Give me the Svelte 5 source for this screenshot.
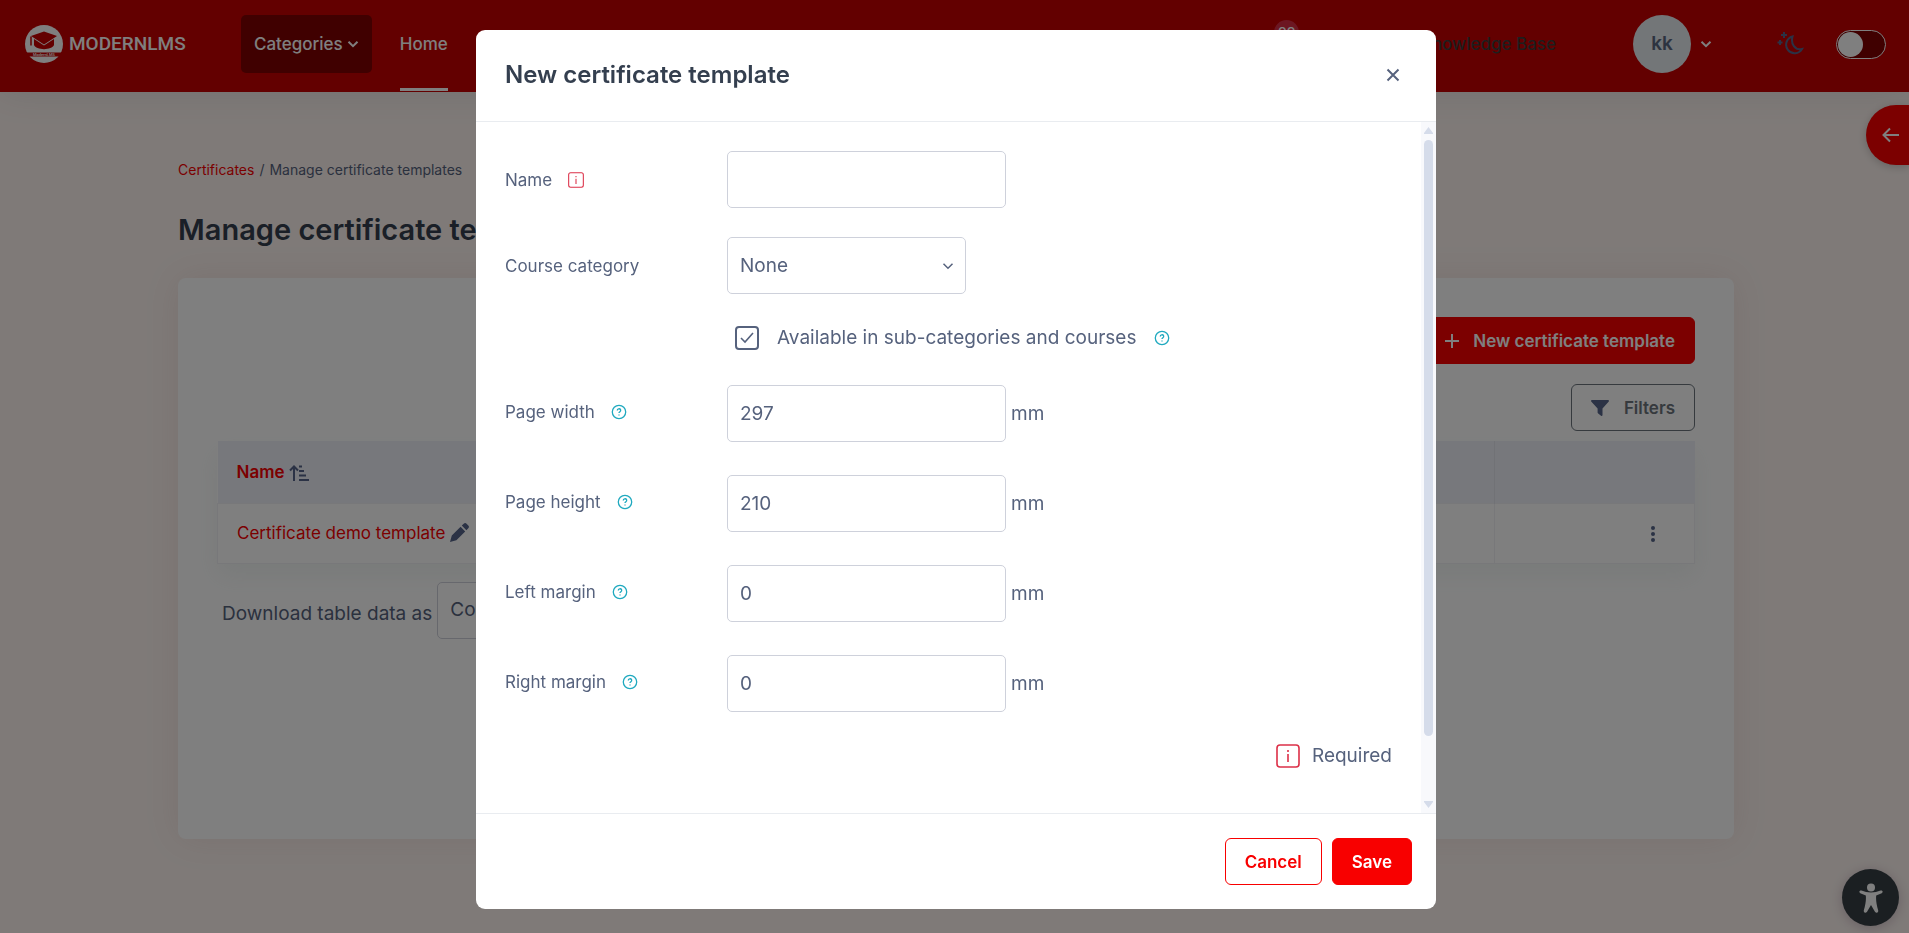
<script lang="ts">
	interface Size {
		id: string;
		label: string;
		value: string;
	}

	let name = $state('');
	let category = $state('none');
	let subCategories = $state(true);
	let darkMode = $state(false);
	let open = $state(true);

	let sizes: Size[] = $state([
		{ id: 'width', label: 'Page width', value: '297' },
		{ id: 'height', label: 'Page height', value: '210' },
		{ id: 'left', label: 'Left margin', value: '0' },
		{ id: 'right', label: 'Right margin', value: '0' }
	]);

	function close() {
		open = false;
	}
</script>

{#snippet chevron(size: number)}
	<svg class="chevron" width={size} height={size} viewBox="0 0 12 12" aria-hidden="true">
		<path d="M1.5 3.8 6 8.2l4.500-4.400" />
	</svg>
{/snippet}

{#snippet help()}
	<button type="button" class="help" aria-label="Help">
		<svg width="16" height="16" viewBox="0 0 16 16">
			<circle cx="8" cy="8" r="6.700" />
			<path d="M6.300 6.500a1.700 1.600 0 1 1 2.500 1.300c-.6.3-.8.600-.8 1.200M8 10.600v1" />
		</svg>
	</button>
{/snippet}

{#snippet required(size: number)}
	<svg class="required-icon" width={size} height={size} viewBox="0 0 24 24" role="img" aria-label="Required">
		<rect x="1" y="1" width="22" height="22" rx="3" />
		<path d="M12 6v2M12 10v8" />
	</svg>
{/snippet}

<div class="page">
	<header class="topbar">
		<a class="logo" href="#home" aria-label="ModernLMS">
			<svg width="38" height="38" viewBox="0 0 38 38" aria-hidden="true">
				<circle cx="19" cy="19" r="19" fill="#fff" />
				<path d="M19 6.500 32 11 19 19.500 6 11Z" fill="#c60000" />
				<path d="M9 14v6c2 5.500 18 5.500 20 0v-6l-10 6.500Z" fill="#c60000" />
				<path d="M6 11.500v9" stroke="#c60000" stroke-width="1.500" />
				<path d="M0 27.500h38v4H0z" fill="#c60000" />
				<text x="19" y="31" text-anchor="middle" font-size="4" fill="#fff">ModernLMS</text>
			</svg>
			<span>MODERNLMS</span>
		</a>
		<nav class="nav">
			<button type="button" class="categories">Categories {@render chevron(12)}</button>
			<a class="nav-link active" href="#home">Home</a>
		</nav>
		<div class="tools">
			<span class="badge">99</span>
			<a class="kb" href="#kb">Knowledge Base</a>
			<button type="button" class="user">
				<span class="avatar">kk</span>
				{@render chevron(12)}
			</button>
			<svg class="moon" width="28" height="26" viewBox="0 0 28 26" aria-hidden="true">
				<path d="M16.500 5.500a8.500 8.500 0 1 0 9.500 12.500c-7 1.500-11.500-5-9.500-12.500Z" />
				<path d="M8 1v6M5 4h6M4 9v5M1.500 11.500h5" />
			</svg>
			<label class="switch">
				<input type="checkbox" bind:checked={darkMode} aria-label="Dark mode" />
			</label>
		</div>
	</header>

	<main>
		<nav class="breadcrumb">
			<a href="#certificates">Certificates</a><span>/</span><span>Manage certificate templates</span>
		</nav>
		<h1>Manage certificate templates</h1>

		<section class="card">
			<div class="actions">
				<button type="button" class="btn primary" onclick={() => (open = true)}>
					<svg width="16" height="16" viewBox="0 0 16 16" aria-hidden="true">
						<path d="M8 1v14M1 8h14" stroke="#fff" stroke-width="2" />
					</svg>
					New certificate template
				</button>
				<button type="button" class="btn filters">
					<svg width="18" height="16" viewBox="0 0 18 16" aria-hidden="true">
						<path d="M1 0h16c1 0 1.300 1 .6 1.700L11.500 8.500V15c0 .9-.8 1.200-1.500.7L7.200 13.500c-.4-.3-.6-.6-.6-1V8.500L.4 1.700C-.3 1 0 0 1 0Z" fill="#56658a" />
					</svg>
					Filters
				</button>
			</div>

			<table>
				<thead>
					<tr>
						<th>
							<a href="#sort">Name</a>
							<svg width="20" height="16" viewBox="0 0 20 16" aria-hidden="true">
								<path d="M5 16V2M1 5.500 5 1.500l4 4M10 1.500h3M10 6h5M10 10.500h7M10 15h10" />
							</svg>
						</th>
						<th class="menu-cell"></th>
					</tr>
				</thead>
				<tbody>
					<tr>
						<td>
							<a href="#template">Certificate demo template</a>
							<svg class="pencil" width="19" height="19" viewBox="0 0 19 19" aria-hidden="true">
								<path d="m10.600 3.800 4.600 4.600-8.800 8.800L0 19l1.800-6.400Zm1.200-1.200 1.900-1.900c.9-.9 2-.9 2.900 0l1.700 1.700c.9.9.9 2 0 2.900l-1.900 1.900Z" />
							</svg>
						</td>
						<td class="menu-cell">
							<button type="button" class="dots" aria-label="Actions">
								<svg width="6" height="16" viewBox="0 0 6 16">
									<circle cx="3" cy="2" r="2" /><circle cx="3" cy="8" r="2" /><circle cx="3" cy="14" r="2" />
								</svg>
							</button>
						</td>
					</tr>
				</tbody>
			</table>

			<div class="download">
				<label for="download">Download table data as</label>
				<select id="download" class="control">
					<option>Comma separated values (.csv)</option>
				</select>
			</div>
		</section>
	</main>

	<button type="button" class="drawer" aria-label="Open block drawer">
		<svg width="18" height="16" viewBox="0 0 18 16">
			<path d="M17 8H2M8 1.500 1.500 8 8 14.500" />
		</svg>
	</button>
	<button type="button" class="accessibility" aria-label="Accessibility">
		<svg width="24" height="30" viewBox="0 0 24 30">
			<circle cx="12" cy="4.500" r="4" />
			<path d="M2.500 7.600c3 1.300 6 2 9.500 2s6.500-.7 9.500-2c2-.8 3 1.700 1.200 2.600l-5.500 2.400c-.5 4 .4 9.500 2 15 .4 2.200-2.600 3-3.400 1L12 22l-3.800 6.600c-.8 2-3.800 1.200-3.400-1 1.600-5.500 2.500-11 2-15L1.300 10.200c-1.800-.9-.8-3.400 1.200-2.600Z" />
		</svg>
	</button>
</div>

{#if open}
	<div class="backdrop">
		<div class="modal" role="dialog" aria-modal="true" aria-labelledby="modal-title">
			<div class="modal-header">
				<h2 id="modal-title">New certificate template</h2>
				<button type="button" class="close" aria-label="Close" onclick={close}>
					<svg width="14" height="14" viewBox="0 0 14 14">
						<path d="m1.500 1.500 11 11M12.500 1.500l-11 11" />
					</svg>
				</button>
			</div>

			<div class="modal-body">
				<form id="template-form">
					<div class="row">
						<div class="label"><label for="name">Name</label>{@render required(16)}</div>
						<input id="name" class="control" type="text" bind:value={name} />
					</div>
					<div class="row">
						<div class="label"><label for="category">Course category</label></div>
						<div class="select">
							<select id="category" class="control" bind:value={category}>
								<option value="none">None</option>
							</select>
							{@render chevron(12)}
						</div>
					</div>
					<div class="row">
						<span></span>
						<div class="check">
							<span class="box">
								<input id="sub" type="checkbox" bind:checked={subCategories} />
								{#if subCategories}
									<svg width="24" height="24" viewBox="0 0 24 24" aria-hidden="true">
										<path d="m6 12 4 4 8-9" />
									</svg>
								{/if}
							</span>
							<label for="sub">Available in sub-categories and courses</label>
							{@render help()}
						</div>
					</div>
					<div class="sizes">
						{#each sizes as size (size.id)}
							<div class="row">
								<div class="label"><label for={size.id}>{size.label}</label>{@render help()}</div>
								<div class="unit">
									<input id={size.id} class="control" type="text" bind:value={size.value} />
									<span>mm</span>
								</div>
							</div>
						{/each}
					</div>
					<div class="legend">{@render required(24)} Required</div>
				</form>
				<div class="scrollbar" aria-hidden="true">
					<svg width="9" height="7" viewBox="0 0 9 7"><path d="M4.500 0 9 6v1H0V6Z" /></svg>
					<div class="track"><div class="thumb"></div></div>
					<svg width="9" height="7" viewBox="0 0 9 7"><path d="M4.500 7 9 1V0H0v1Z" /></svg>
				</div>
			</div>

			<div class="modal-footer">
				<button type="button" class="btn outline" onclick={close}>Cancel</button>
				<button type="submit" form="template-form" class="btn primary">Save</button>
			</div>
		</div>
	</div>
{/if}

<style>
	:global(body) {
		margin: 0;
		background: #fef5f1;
		color: #56627d;
		font-family: Inter, 'Open Sans', sans-serif;
		font-size: 19px;
		line-height: 30px;
	}

	* {
		box-sizing: border-box;
	}

	a {
		color: #f80000;
		text-decoration: none;
	}

	button {
		padding: 0;
		border: none;
		background: none;
		color: inherit;
		font: inherit;
		cursor: pointer;
	}

	svg {
		display: block;
		flex: none;
		fill: none;
	}

	.chevron {
		stroke: currentColor;
		stroke-width: 2;
	}

	.page {
		height: 100vh;
		overflow: hidden;
	}

	/* ---- Top bar ---- */

	.topbar {
		display: flex;
		align-items: center;
		height: 92px;
		padding: 0 23px 4px 25px;
		background: #c60000;
		color: #fff;
		font-size: 17px;
		font-weight: 500;
		box-shadow: 0 0 36px rgba(60, 70, 90, 0.12);
	}

	.logo {
		display: flex;
		align-items: center;
		gap: 6px;
		width: 216px;
		color: #fff;
		font-family: Roboto, sans-serif;
		font-size: 19px;
	}

	.nav {
		display: flex;
		align-self: stretch;
		align-items: center;
		gap: 28px;
	}

	.categories {
		display: flex;
		align-items: center;
		gap: 4px;
		height: 58px;
		padding: 0 13px;
		border-radius: 5px;
		background: #800000;
	}

	.nav-link {
		display: flex;
		align-items: center;
		align-self: stretch;
		margin-bottom: -3px;
		border-bottom: 3px solid transparent;
		color: #fff;
	}

	.active {
		border-bottom-color: #fff;
	}

	.tools {
		display: flex;
		align-items: center;
		margin-left: auto;
	}

	.badge {
		width: 25px;
		height: 25px;
		margin: 0 121px 24px 0;
		border-radius: 50%;
		background: #d92e44;
		font-size: 14px;
		line-height: 25px;
		text-align: center;
	}

	.kb {
		margin-right: 77px;
		color: #3c3c3c;
	}

	.user {
		display: flex;
		align-items: center;
		gap: 9px;
		margin-right: 64px;
	}

	.avatar {
		width: 58px;
		height: 58px;
		border-radius: 50%;
		background: #e6ecf0;
		color: #5a6780;
		font-size: 19px;
		font-weight: 600;
		line-height: 58px;
	}

	.moon {
		margin-right: 32px;
		stroke: #56658a;
		stroke-width: 2;
	}

	.switch {
		display: flex;
	}

	.switch input {
		appearance: none;
		display: flex;
		width: 50px;
		height: 29px;
		margin: 0;
		padding: 1px;
		border: 1px solid #fff;
		border-radius: 15px;
		background: #800000;
	}

	.switch input::before {
		content: '';
		width: 25px;
		height: 25px;
		border-radius: 50%;
		background: #fff;
	}

	.switch input:checked {
		justify-content: flex-end;
	}

	/* ---- Page content ---- */

	main {
		padding: 63px 175px 0 178px;
	}

	.breadcrumb {
		display: flex;
		gap: 5px;
		font-size: 14px;
	}

	h1 {
		margin: 26px 0 30px;
		color: #343f4f;
		font-size: 29px;
		font-weight: 600;
		line-height: 37px;
	}

	.card {
		min-height: 561px;
		padding: 39px;
		border-radius: 8px;
		background: #fff;
		box-shadow: 0 0 36px rgba(150, 70, 70, 0.1);
	}

	.actions {
		display: flex;
		flex-direction: column;
		align-items: flex-end;
		gap: 20px;
		margin-bottom: 10px;
	}

	.btn {
		display: flex;
		align-items: center;
		height: 47px;
		padding: 0 19px;
		border: 1px solid #f80000;
		border-radius: 6px;
		font-size: 17px;
		font-weight: 600;
	}

	.primary {
		gap: 13px;
		background: #f80000;
		color: #fff;
	}

	.outline {
		color: #f80000;
	}

	.filters {
		gap: 15px;
		border-color: #6c757d;
		color: #6c757d;
	}

	table {
		width: 100%;
		border-collapse: collapse;
		font-size: 17px;
		text-align: left;
		box-shadow: 0 12px 24px rgba(150, 180, 170, 0.12);
	}

	th {
		height: 62px;
		padding: 0 19px;
		background: #eef0f8;
		font-weight: 600;
	}

	td {
		height: 60px;
		padding: 0 19px;
		border: 1px solid #f0f1f5;
	}

	th svg,
	td svg {
		display: inline-block;
		vertical-align: -3px;
	}

	th svg {
		stroke: #56658a;
		stroke-width: 2;
	}

	.pencil {
		fill: #56658a;
	}

	.menu-cell {
		width: 200px;
		padding-right: 38px;
		border-left: 1px solid #e2e4ec;
		text-align: right;
	}

	.dots svg {
		fill: #56658a;
	}

	.download {
		display: flex;
		align-items: center;
		gap: 5px;
		margin: 18px 0 0 5px;
	}

	.download label {
		padding-top: 8px;
	}

	.drawer {
		position: fixed;
		top: 105px;
		right: 0;
		display: flex;
		align-items: center;
		width: 43px;
		height: 60px;
		padding-left: 16px;
		border-radius: 30px 0 0 30px;
		background: #f80000;
		stroke: #fff;
		stroke-width: 2;
		box-shadow: 0 2px 8px rgba(0, 0, 0, 0.2);
	}

	.accessibility {
		position: fixed;
		right: 10px;
		bottom: 7px;
		display: grid;
		place-items: center;
		width: 57px;
		height: 57px;
		border-radius: 50%;
		background: #373f45;
		box-shadow: 0 2px 12px rgba(70, 30, 70, 0.25);
	}

	.accessibility svg {
		fill: #fff;
	}

	/* ---- Modal ---- */

	.backdrop {
		position: fixed;
		inset: 0;
		display: flex;
		justify-content: center;
		padding: 30px 0 24px 3px;
		background: rgba(0, 0, 0, 0.5);
	}

	.modal {
		display: flex;
		flex-direction: column;
		width: 100%;
		max-width: 960px;
		border-radius: 9px;
		background: #fff;
		overflow: hidden;
	}

	.modal-header {
		display: flex;
		align-items: center;
		justify-content: space-between;
		padding: 29px 36px 31px 29px;
		border-bottom: 1px solid #e9ecf0;
	}

	h2 {
		margin: 0;
		color: #343f4f;
		font-size: 24px;
		font-weight: 600;
		line-height: 31px;
	}

	.close svg {
		stroke: #56627d;
		stroke-width: 2;
	}

	.modal-body {
		flex: 1;
		display: flex;
		min-height: 0;
	}

	form {
		flex: 1;
		display: flex;
		flex-direction: column;
		gap: 29px;
		padding: 29px;
		overflow: hidden;
	}

	.row {
		display: grid;
		grid-template-columns: 222px 1fr;
		align-items: center;
		justify-items: start;
	}

	.label {
		display: flex;
		align-items: center;
		gap: 16px;
		font-size: 17px;
	}

	.control {
		width: 279px;
		height: 57px;
		padding: 0 12px;
		border: 1px solid #ced1db;
		border-radius: 5px;
		background: #fff;
		color: #56627d;
		font: inherit;
		appearance: none;
	}

	.select {
		display: grid;
		align-items: center;
		width: 239px;
	}

	.select > :global(*) {
		grid-area: 1 / 1;
	}

	.select .control {
		width: 100%;
	}

	.select .chevron {
		justify-self: end;
		margin-right: 12px;
		stroke-width: 1.5;
		pointer-events: none;
	}

	.check {
		display: flex;
		align-items: center;
		gap: 18px;
		padding-left: 8px;
	}

	.box {
		display: grid;
	}

	.box > :global(*) {
		grid-area: 1 / 1;
	}

	.box input {
		appearance: none;
		width: 24px;
		height: 24px;
		margin: 0;
		border: 2px solid #56627d;
		border-radius: 4px;
	}

	.box svg {
		pointer-events: none;
		stroke: #56627d;
		stroke-width: 1.6;
	}

	.help svg {
		stroke: #1fa9bf;
		stroke-width: 1.3;
	}

	.required-icon {
		stroke: #dc3048;
		stroke-width: 1.6;
	}

	.sizes {
		display: flex;
		flex-direction: column;
		gap: 33px;
		padding-top: 3px;
	}

	.sizes .label {
		padding-bottom: 4px;
	}

	.unit {
		display: flex;
		align-items: center;
		gap: 5px;
	}

	.legend {
		display: flex;
		align-items: center;
		justify-content: flex-end;
		gap: 12px;
	}

	.scrollbar {
		display: flex;
		flex-direction: column;
		align-items: center;
		width: 15px;
		padding: 5px 0;
		background: #f8f9fc;
	}

	.scrollbar svg {
		fill: #d5dcea;
	}

	.track {
		flex: 1;
		width: 9px;
		padding: 6px 0;
	}

	.thumb {
		height: 91%;
		border-radius: 5px;
		background: #d5dcea;
	}

	.modal-footer {
		display: flex;
		justify-content: flex-end;
		gap: 10px;
		padding: 24px;
		border-top: 1px solid #e9ecf0;
	}
</style>
